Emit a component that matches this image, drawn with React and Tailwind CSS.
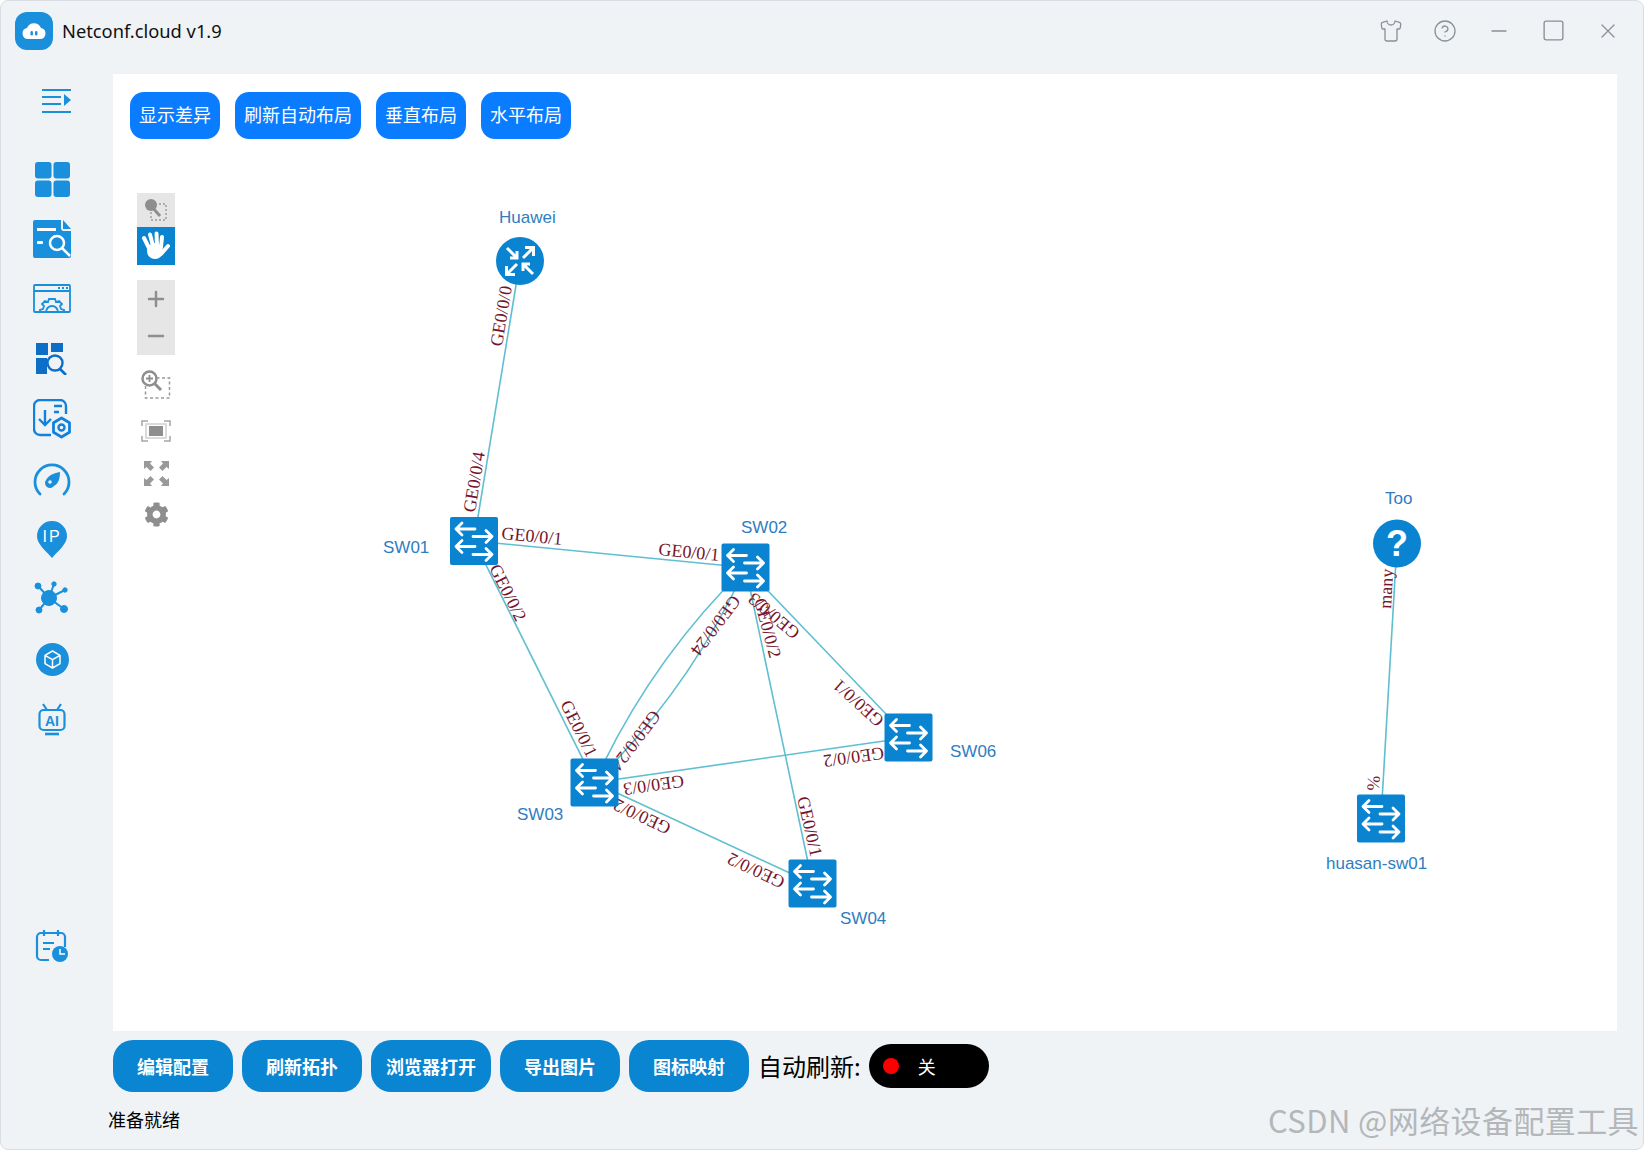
import { Shirt, CircleHelp, Minus, Square, X, Plus } from "lucide-react";
import { FaCog } from "react-icons/fa";

const cjk = "font-['Noto_Sans_CJK_SC','Noto_Sans',sans-serif]";

const blue = "#1a8fdb";

const MenuIcon = () => (
  <svg width="30" height="24" viewBox="0 0 30 24" fill={blue}>
    <rect x="0" y="0" width="29" height="2" />
    <rect x="0" y="7" width="19" height="2" />
    <rect x="0" y="14" width="19" height="2" />
    <rect x="0" y="22" width="29" height="2" />
    <path d="M22 5l7 6-7 6z" />
  </svg>
);

const GridIcon = () => (
  <svg width="35" height="35" viewBox="0 0 36 36" fill={blue}>
    <rect x="0" y="0" width="17" height="17" rx="3" />
    <rect x="19" y="0" width="17" height="17" rx="3" />
    <rect x="0" y="19" width="17" height="17" rx="3" />
    <rect x="19" y="19" width="17" height="17" rx="3" />
  </svg>
);

const DocSearchIcon = () => (
  <svg width="38" height="38" viewBox="0 0 38 38">
    <path fill={blue} d="M2 0h26v8a3 3 0 0 0 3 3h7v25a2 2 0 0 1-2 2H2a2 2 0 0 1-2-2V2a2 2 0 0 1 2-2z" />
    <path fill={blue} d="M30 0l8 9h-8z" />
    <rect x="4" y="8" width="19" height="3" fill="white" />
    <rect x="4" y="21" width="6" height="3" rx="1" fill="white" />
    <circle cx="24" cy="23" r="7" fill="none" stroke="white" strokeWidth="2.5" />
    <path d="M29 28l8 8" stroke="white" strokeWidth="2.5" />
  </svg>
);

const WindowGearIcon = () => (
  <svg width="38" height="30" viewBox="0 0 38 30" fill="none" stroke={blue} strokeWidth="1.8">
    <rect x="1" y="1" width="36" height="27" rx="1" />
    <path d="M1 7h36" />
    <path d="M25 4h2M29 4h2M33 4h2" strokeWidth="2" />
    <path d="M7 28v-2l3-1 1-3-2-2 3-3 3 1 1-3h6l1 3 3-1 3 3-2 2 1 3 3 1v2" />
    <path d="M13 28a6 6 0 0 1 12 0" />
  </svg>
);

const GridSearchIcon = () => (
  <svg width="32" height="32" viewBox="0 0 32 32">
    <path fill="#0d6ec8" d="M0 0h12v12H0zM15 0h12v9H15zM0 15h11v16H0z" />
    <circle cx="19" cy="20" r="7.5" fill="none" stroke="#0d6ec8" strokeWidth="2.4" />
    <path d="M24 26l6 6" stroke="#0d6ec8" strokeWidth="2.6" />
  </svg>
);

const ImportIcon = () => (
  <svg width="39" height="40" viewBox="0 0 39 40" fill="none" stroke="#1281de" strokeWidth="2.4">
    <path d="M18 36H7a6 6 0 0 1-6-6V7a6 6 0 0 1 6-6h20a6 6 0 0 1 6 6v8" />
    <path d="M12 11v14M6 20l6 6 6-6" />
    <path d="M21 7h8M21 13h5" />
    <path d="M28.500 19l8 4.700v9.600l-8 4.700-8-4.700v-9.600z" strokeWidth="2.800" strokeLinejoin="round" />
    <circle cx="28.500" cy="28.500" r="3" />
  </svg>
);

const GaugeIcon = () => (
  <svg width="38" height="33" viewBox="0 0 38 33" fill="none">
    <path d="M7 31A17 17 0 1 1 31 31" stroke={blue} strokeWidth="2.8" strokeLinecap="round" />
    <path fill={blue} d="M27 9c0 7-2 12-6 14a5 5 0 0 1-8-6c3-5 8-7 14-8z" />
    <circle cx="17" cy="19" r="1.800" fill="#eff3f6" />
  </svg>
);

const PinIcon = () => (
  <svg width="30" height="37" viewBox="0 0 30 37">
    <path fill={blue} d="M15 0a15 15 0 0 1 15 15c0 8-8 14-15 22C8 29 0 23 0 15A15 15 0 0 1 15 0z" />
    <text x="15" y="20.500" textAnchor="middle" fill="white" fontSize="16" letterSpacing="2" fontFamily="Liberation Sans, sans-serif">IP</text>
  </svg>
);

const HubIcon = () => (
  <svg width="36" height="36" viewBox="0 0 36 36" fill={blue} stroke={blue}>
    <path d="M15 17L4 5M15 17L20 3M15 17L31 9M15 17L5 29M15 17L30 28" strokeWidth="2" />
    <circle cx="15" cy="17" r="7.500" />
    <circle cx="4" cy="5" r="3" />
    <circle cx="20" cy="3" r="2.200" />
    <circle cx="31" cy="9" r="2.200" />
    <circle cx="5" cy="29" r="3" />
    <circle cx="30" cy="28" r="3.500" />
  </svg>
);

const CubeIcon = () => (
  <svg width="33" height="33" viewBox="0 0 33 33">
    <circle cx="16.500" cy="16.500" r="16.500" fill={blue} />
    <path d="M16.500 8l7.500 4.300v8.400L16.500 25 9 20.700V12.300zM9 12.300l7.500 4.400 7.500-4.400M16.500 16.700V25" fill="none" stroke="white" strokeWidth="1.500" strokeLinejoin="round" />
  </svg>
);

const AiIcon = () => (
  <svg width="28" height="34" viewBox="0 0 28 34" fill="none" stroke={blue} strokeWidth="2.200">
    <path d="M9 8L5 2M19 8l4-6" />
    <rect x="1.500" y="8" width="25" height="20" rx="4" />
    <path d="M7 32h14" strokeWidth="2.600" />
    <text x="14" y="23.500" textAnchor="middle" fill={blue} stroke="none" fontSize="14" fontWeight="700" fontFamily="Liberation Sans, sans-serif">AI</text>
  </svg>
);

const CalendarIcon = () => (
  <svg width="34" height="34" viewBox="0 0 34 34" fill="none" stroke={blue} strokeWidth="2.200">
    <path d="M14 31H6a4 4 0 0 1-4-4V8a4 4 0 0 1 4-4h20a4 4 0 0 1 4 4v10" />
    <path d="M9 1v6M23 1v6M8 14h11M8 20h7" />
    <circle cx="25" cy="25" r="8" fill={blue} stroke="none" />
    <path d="M25 20v5h5" stroke="white" strokeWidth="1.500" />
  </svg>
);

const HandIcon = () => (
  <svg width="30" height="30" viewBox="0 0 30 30" fill="white" stroke="white" strokeLinecap="round">
    <ellipse cx="14" cy="20" rx="8" ry="8" stroke="none" />
    <path d="M8 17L3 7M12 15L9 3.500M16 15l-.5-12.500M20 16l1-10M20 23l7-8" strokeWidth="4" />
  </svg>
);

const sideIcons = [
  { key: "grid", icon: <GridIcon /> },
  { key: "doc", icon: <DocSearchIcon /> },
  { key: "window", icon: <WindowGearIcon /> },
  { key: "search", icon: <GridSearchIcon /> },
  { key: "import", icon: <ImportIcon /> },
  { key: "gauge", icon: <GaugeIcon /> },
  { key: "pin", icon: <PinIcon /> },
  { key: "hub", icon: <HubIcon /> },
  { key: "cube", icon: <CubeIcon /> },
  { key: "ai", icon: <AiIcon /> },
];

// topology, in page coordinates (the svg viewBox starts at the canvas corner)
const switches = [
  [474, 541],
  [745.5, 567.5],
  [594.5, 782.5],
  [812.5, 883.5],
  [908.5, 737.5],
  [1381, 818.5],
];

const links = [
  "M520 261L474 541",
  "M474 541L745.5 567.5",
  "M474 541L594.5 782.5",
  "M745.5 567.5Q650 661 594.5 782.5",
  "M745.5 567.5Q690 689 594.5 782.5",
  "M745.5 567.5L812.5 883.5",
  "M745.5 567.5L908.5 737.5",
  "M594.5 782.5L908.5 737.5",
  "M594.5 782.5L812.5 883.5",
  "M1397 543.5L1381 818.5",
];

const nodeNames = [
  ["Huawei", 499, 223],
  ["SW01", 383, 553],
  ["SW02", 741, 533],
  ["SW06", 950, 757],
  ["SW03", 517, 820],
  ["SW04", 840, 924],
  ["Too", 1385, 504],
  ["huasan-sw01", 1326, 869],
];

const portLabels = [
  ["GE0/0/0", 502, 347, -80.6],
  ["GE0/0/4", 475, 513, -80.6],
  ["GE0/0/1", 501, 539, 5.5],
  ["GE0/0/1", 658, 555, 5.5],
  ["GE0/0/2", 489, 568, 63.5],
  ["GE0/0/1", 560, 704, 63.5],
  ["GE0/0/24", 732, 594, 127],
  ["GE0/0/24", 652, 709, 127],
  ["GE0/0/3", 801, 631, 220],
  ["GE0/0/2", 754, 600, 75],
  ["GE0/0/1", 885, 719, 222],
  ["GE0/0/2", 883, 747, 172],
  ["GE0/0/3", 683, 775, 172],
  ["GE0/0/2", 672, 824, 205],
  ["GE0/0/2", 786, 878, 205],
  ["GE0/0/1", 797, 798, 77],
  ["many", 1391, 609, -86.7],
  ["%", 1379, 791, -86.7],
];

const SwitchNode = ({ x, y }) => (
  <g transform={`translate(${x} ${y})`}>
    <rect x="-24" y="-24" width="48" height="48" rx="2" fill="#0a84d0" />
    <g fill="none" stroke="white" strokeWidth="2.8" strokeLinecap="round" strokeLinejoin="round">
      <path d="M1-12H-18M-12-18L-18-12L-12-6" />
      <path d="M-1-4.500H18M12-10.500L18-4.500L12 1.500" />
      <path d="M1 5.500H-18M-12-0.500L-18 5.500L-12 11.500" />
      <path d="M-1 13.500H18M12 7.500L18 13.500L12 19.500" />
    </g>
  </g>
);

const Topology = () => (
  <svg
    className="absolute inset-0 font-['Liberation_Serif',serif]"
    width="1504"
    height="957"
    viewBox="113 74 1504 957"
  >
    <g fill="none" stroke="#5fbfd1" strokeWidth="1.6">
      {links.map((d) => (
        <path key={d} d={d} />
      ))}
    </g>

    {portLabels.map(([text, x, y, angle]) => (
      <text key={`${text}${x}`} transform={`translate(${x} ${y}) rotate(${angle})`} fontSize="18" fill="#73152d">
        {text}
      </text>
    ))}

    {switches.map(([x, y]) => (
      <SwitchNode key={x} x={x} y={y} />
    ))}

    {/* router */}
    <g transform="translate(520 261)">
      <circle r="24" fill="#0a84d0" />
      <g fill="none" stroke="white" strokeWidth="3" strokeLinejoin="miter">
        <path d="M-13-13L-3-3M-3-10V-3H-10" />
        <path d="M13-13L3-3M5-13.500H13.500V-5" />
        <path d="M-13 13L-3 3M-5 13.500H-13.500V5" />
        <path d="M13 13L3 3M3 10V3H10" />
      </g>
    </g>

    {/* unknown device */}
    <circle cx="1397" cy="543.5" r="24" fill="#0a84d0" />
    <text x="1397" y="556" textAnchor="middle" fill="white" fontSize="36" fontWeight="700" fontFamily="Liberation Sans, sans-serif">?</text>

    {nodeNames.map(([name, x, y]) => (
      <text key={name} x={x} y={y} fontSize="17" fill="#2f7dbf" fontFamily="Liberation Sans, sans-serif">
        {name}
      </text>
    ))}
  </svg>
);

const Toolbar = () => (
  <div className="relative mt-[54px] ml-[24px] flex w-[38px] flex-col items-center text-[#8e8e8e]">
    <div className="flex h-[34px] w-[38px] items-center justify-center bg-[#e6e6e6]">
      <svg width="24" height="24" viewBox="0 0 24 24">
        <rect x="7" y="6" width="15" height="16" fill="none" stroke="#999" strokeWidth="1.4" strokeDasharray="2 2" />
        <circle cx="7" cy="7" r="6" fill="#8e8e8e" />
        <path d="M8 9l8 9" stroke="#8e8e8e" strokeWidth="3" />
      </svg>
    </div>
    <div className="flex h-[38px] w-[38px] items-center justify-center bg-[#0a84d0]">
      <HandIcon />
    </div>
    <div className="mt-[15px] flex h-[75px] w-[38px] flex-col items-center justify-center gap-[13px] bg-[#e6e6e6]">
      <Plus size={24} strokeWidth={2.5} />
      <Minus size={24} strokeWidth={2.5} />
    </div>
    <svg className="mt-[15px]" width="30" height="30" viewBox="0 0 30 30" fill="none">
      <rect x="4.500" y="8" width="24" height="20" stroke="#999" strokeWidth="1.5" strokeDasharray="3 2.5" />
      <circle cx="8.500" cy="8.500" r="7" fill="white" stroke="#8e8e8e" strokeWidth="2.5" />
      <path d="M5 8.500h7M8.500 5v7" stroke="#8e8e8e" strokeWidth="1.8" />
      <path d="M13 13l7 7" stroke="#8e8e8e" strokeWidth="3" />
    </svg>
    <svg className="mt-[20px]" width="30" height="22" viewBox="0 0 30 22" fill="none" stroke="#a5a5a5" strokeWidth="1.5">
      <path d="M1 6V1h6M23 1h6v5M29 16v5h-6M7 21H1v-5" />
      <rect x="5" y="4" width="20" height="14" stroke="#d0d0d0" />
      <rect x="8" y="6" width="14" height="10" fill="#8e8e8e" stroke="none" />
    </svg>
    <svg className="mt-[18px]" width="27" height="27" viewBox="0 0 27 27" fill="#999">
      <path d="M1 1h8L7 3.500 11 7.500 7.500 11 3.500 7 1 9zM26 1v8L23.500 7 19.500 11 16 7.500 20 3.500 18 1zM1 26v-8L3.500 20 7.500 16 11 19.500 7 23.500 9 26zM26 26h-8L20 23.500 16 19.500 19.500 16 23.500 20 26 18z" />
    </svg>
    <FaCog size={25} className="mt-[15px]" />
  </div>
);

const topButtons = ["显示差异", "刷新自动布局", "垂直布局", "水平布局"];
const bottomButtons = ["编辑配置", "刷新拓扑", "浏览器打开", "导出图片", "图标映射"];

export default function App() {
  return (
    <div className={`relative h-[1150px] w-[1644px] overflow-hidden bg-white ${cjk}`}>
      <div className="flex h-full flex-col rounded-lg border border-[#d9dee4] bg-[#eff3f6]">
        {/* title bar */}
        <div className="flex h-[73px] shrink-0 items-center pb-[14px]">
          <div className="ml-[14px] flex h-[38px] w-[38px] items-center justify-center rounded-xl bg-[#1a8fdb]">
            <svg width="24" height="18" viewBox="0 0 24 18">
              <path fill="white" d="M6 17a5.500 5.500 0 0 1-1-10.900A7.500 7.500 0 0 1 19 6.100 5.500 5.500 0 0 1 18 17z" />
              <rect x="8.500" y="9" width="2.400" height="4.500" rx="1.200" fill="#1a8fdb" />
              <rect x="13" y="9" width="2.400" height="4.500" rx="1.200" fill="#1a8fdb" />
            </svg>
          </div>
          <div className="ml-[9px] text-[18.3px] text-[#111] font-['Noto_Sans',sans-serif]">Netconf.cloud v1.9</div>
          <div className="ml-auto mr-[23px] flex items-center gap-[30px] text-[#8b9096]">
            <Shirt size={24} strokeWidth={1.3} />
            <CircleHelp size={24} strokeWidth={1.3} />
            <Minus size={24} strokeWidth={1.3} />
            <Square size={25} strokeWidth={1.3} />
            <X size={24} strokeWidth={1.3} />
          </div>
        </div>

        <div className="flex min-h-0 flex-1">
          {/* sidebar */}
          <div className="flex w-[112px] shrink-0 flex-col items-center pr-[10px] pt-[15px]">
            <div className="ml-[9px]">
              <MenuIcon />
            </div>
            <div className="mt-[36px] flex flex-col items-center">
              {sideIcons.map((item) => (
                <div key={item.key} className="flex h-[60px] items-center justify-center">
                  {item.icon}
                </div>
              ))}
            </div>
            <div className="mt-[180px]">
              <CalendarIcon />
            </div>
          </div>

          {/* main */}
          <div className="flex min-w-0 flex-1 flex-col">
            <div className="relative h-[957px] w-[1504px] bg-white">
              <Topology />
              <div className="relative flex gap-[15px] pl-[17px] pt-[18px]">
                {topButtons.map((label) => (
                  <button key={label} className="h-[47px] rounded-[14px] bg-[#0a7cff] px-[9px] pb-[2px] text-[18px] text-white">
                    {label}
                  </button>
                ))}
              </div>
              <Toolbar />
            </div>

            <div className="mt-[9px] flex items-center gap-[9px]">
              {bottomButtons.map((label) => (
                <button key={label} className="h-[52px] w-[120px] rounded-[20px] bg-[#0a85d1] text-[18px] font-bold text-white">
                  {label}
                </button>
              ))}
              <span className="text-[24px] text-black">自动刷新:</span>
              <div className="-ml-[1px] flex h-[44px] w-[120px] items-center rounded-full bg-black pl-[14px]">
                <span className="h-[16px] w-[16px] rounded-full bg-[#ff0000]" />
                <span className="ml-[19px] text-[18px] text-white">关</span>
              </div>
            </div>

            <div className="-ml-[5px] mt-[14px] text-[18px] leading-[26px] text-black">准备就绪</div>
          </div>
        </div>
      </div>

      {/* watermark */}
      <div className="absolute bottom-[8px] right-[5px] text-[31px] leading-[44px] tracking-[0.4px] text-[#b4b7ba]">CSDN @网络设备配置工具</div>
    </div>
  );
}
